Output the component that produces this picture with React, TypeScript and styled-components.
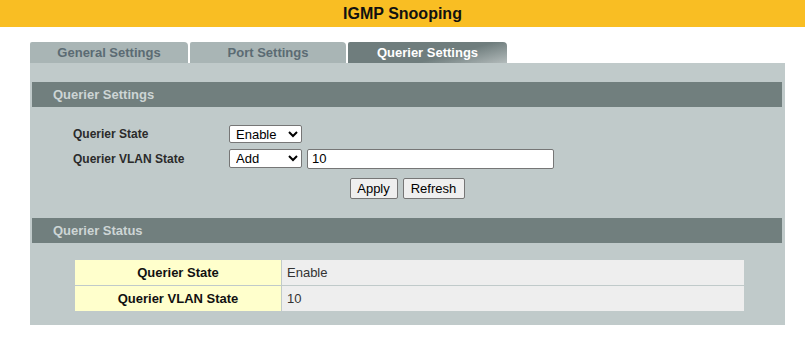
import React from 'react'
import styled, { createGlobalStyle } from 'styled-components'

const GlobalStyle = createGlobalStyle`
  body {
    margin: 0;
    background: #ffffff;
    font-family: 'Liberation Sans', Arial, sans-serif;
  }
`

const TitleBar = styled.div`
  height: 27px;
  background: #f9be23;
  display: flex;
  align-items: center;
  justify-content: center;
  font-size: 16px;
  font-weight: bold;
  color: #111111;
`

const Wrap = styled.div`
  width: 755px;
  padding: 15px 0 0 30px;
`

const TabBar = styled.div`
  display: flex;
  gap: 2px;
  height: 21px;
`

const Tab = styled.div<{ $w: number; $active?: boolean }>`
  width: ${({ $w }) => $w}px;
  height: 21px;
  border-radius: 2px 4px 0 0;
  display: flex;
  align-items: center;
  justify-content: center;
  font-size: 13px;
  font-weight: bold;
  color: ${({ $active }) => ($active ? '#ffffff' : '#5b6b73')};
  background: ${({ $active }) =>
    $active
      ? 'linear-gradient(165deg, #6f7d7d 0%, #6f7d7d 62%, #b3bbbb 100%)'
      : '#a9b5b5'};
`

const Panel = styled.div`
  background: #c0caca;
  padding: 19px 3px 14px 2px;
`

const SectionHeader = styled.div`
  height: 25px;
  line-height: 25px;
  background: #717f7e;
  padding-left: 21px;
  font-size: 13px;
  font-weight: bold;
  color: #cdd5d5;
`

const Form = styled.div`
  padding: 14px 0 0 41px;
`

const FormRow = styled.div`
  display: flex;
  align-items: center;
  height: 25px;
`

const Label = styled.div`
  width: 156px;
  font-size: 12px;
  font-weight: bold;
  color: #2b2b2b;
`

const Select = styled.select<{ $h: number }>`
  width: 73px;
  height: ${({ $h }) => $h}px;
  font-family: 'Liberation Sans', Arial, sans-serif;
  font-size: 13px;
  color: #000000;
  background: #ffffff;
  border: 1px solid #767676;
  border-radius: 2px;
  padding: 0 0 0 2px;
`

const TextInput = styled.input`
  width: 247px;
  height: 20px;
  box-sizing: border-box;
  margin-left: 5px;
  font-family: 'Liberation Sans', Arial, sans-serif;
  font-size: 13px;
  border: 1px solid #767676;
  border-radius: 2px;
  padding: 0 4px;
  background: #ffffff;
`

const ButtonRow = styled.div`
  display: flex;
  justify-content: center;
  gap: 5px;
  margin-top: 7px;
`

const Button = styled.button<{ $w: number }>`
  width: ${({ $w }) => $w}px;
  height: 21px;
  padding: 0;
  font-family: 'Liberation Sans', Arial, sans-serif;
  font-size: 13px;
  color: #000000;
  background: #efefef;
  border: 1px solid #767676;
  border-radius: 2px;
`

const StatusHeader = styled(SectionHeader)`
  margin-top: 19px;
`

const StatusTable = styled.div`
  display: grid;
  grid-template-columns: 206px 1fr;
  grid-auto-rows: 25px;
  gap: 1px;
  width: 669px;
  margin: 17px 0 0 43px;
`

const KeyCell = styled.div`
  background: #ffffcc;
  display: flex;
  align-items: center;
  justify-content: center;
  font-size: 13px;
  font-weight: bold;
  color: #111111;
`

const ValueCell = styled.div`
  background: #eeeeee;
  display: flex;
  align-items: center;
  padding-left: 5px;
  font-size: 13px;
  color: #333333;
`

const status = [
  { key: 'Querier State', value: 'Enable' },
  { key: 'Querier VLAN State', value: '10' },
]

const App = () => (
  <>
    <GlobalStyle />
    <TitleBar>IGMP Snooping</TitleBar>
    <Wrap>
      <TabBar>
        <Tab $w={158}>General Settings</Tab>
        <Tab $w={156}>Port Settings</Tab>
        <Tab $w={159} $active>
          Querier Settings
        </Tab>
      </TabBar>
      <Panel>
        <SectionHeader>Querier Settings</SectionHeader>
        <Form>
          <FormRow>
            <Label>Querier State</Label>
            <Select $h={18} defaultValue="enable">
              <option value="enable">Enable</option>
              <option value="disable">Disable</option>
            </Select>
          </FormRow>
          <FormRow>
            <Label>Querier VLAN State</Label>
            <Select $h={19} defaultValue="add">
              <option value="add">Add</option>
              <option value="remove">Remove</option>
            </Select>
            <TextInput defaultValue="10" />
          </FormRow>
        </Form>
        <ButtonRow>
          <Button $w={48}>Apply</Button>
          <Button $w={62}>Refresh</Button>
        </ButtonRow>
        <StatusHeader>Querier Status</StatusHeader>
        <StatusTable>
          {status.map((s) => (
            <React.Fragment key={s.key}>
              <KeyCell>{s.key}</KeyCell>
              <ValueCell>{s.value}</ValueCell>
            </React.Fragment>
          ))}
        </StatusTable>
      </Panel>
    </Wrap>
  </>
)

export default App
